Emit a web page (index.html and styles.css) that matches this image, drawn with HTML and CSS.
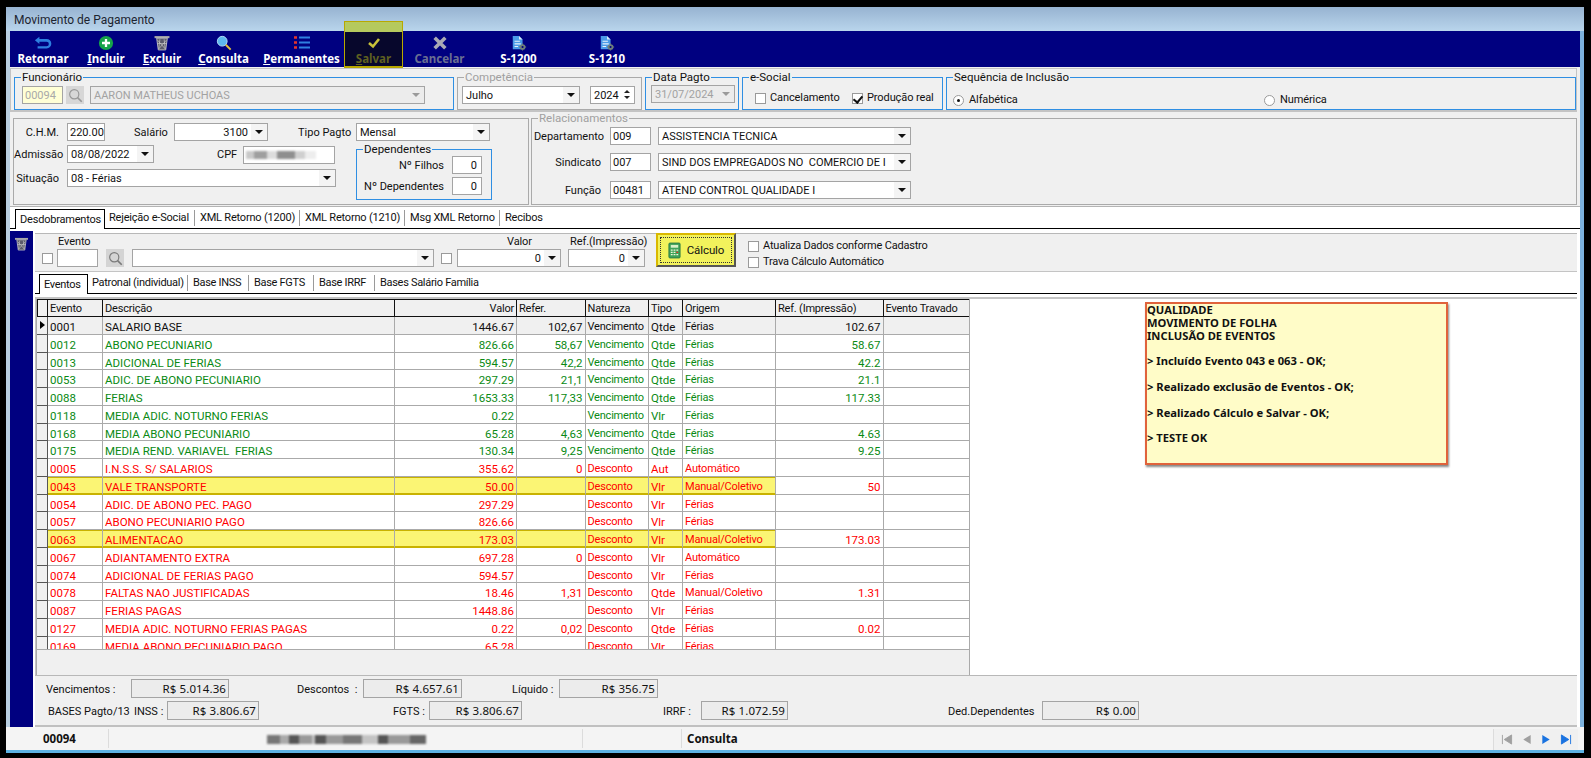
FILE: index.html
```html
<!DOCTYPE html>
<html lang="pt-BR">
<head>
<meta charset="utf-8">
<title>Movimento de Pagamento</title>
<link rel="stylesheet" href="styles.css">
</head>
<body>
<svg class="defs" width="0" height="0" aria-hidden="true">
  <defs>
    <symbol id="i-trash" viewBox="0 0 16 15">
      <path d="M1 1h14v2H1z" fill="#a8a8a8"/>
      <path d="M3 3l1.5 11h7L13 3z" fill="#5a5a6a" stroke="#c8c8c8" stroke-width=".8"/>
      <path d="M4 5l7 8M12 5l-7 8M6 4l-1 9M10 4l1 9M3.5 8h9" stroke="#d0d0d0" stroke-width=".6" fill="none"/>
    </symbol>
    <symbol id="i-doc" viewBox="0 0 18 18">
      <path d="M2 1h7l4 4v11H2z" fill="#4a9be8"/>
      <path d="M9 1l4 4H9z" fill="#d5e9fa"/>
      <path d="M4 7h6M4 10h7M4 13h4" stroke="#e8f3fc" stroke-width="1.2"/>
      <circle cx="13" cy="13.5" r="3.2" fill="#6f7f7a"/>
      <circle cx="13" cy="13.5" r="1.2" fill="#000080"/>
      <path d="M13 9.5v1.5M13 16v1.500M9 13.500h1.500M15.500 13.500H17" stroke="#6f7f7a" stroke-width="1.200"/>
    </symbol>
    <symbol id="i-lens" viewBox="0 0 18 18">
      <circle cx="7.500" cy="7.500" r="5.500" fill="none" stroke="#7a7a7a" stroke-width="1.400"/>
      <path d="M11.500 11.500l5 5" stroke="#7a7a7a" stroke-width="2"/>
    </symbol>
  </defs>
</svg>

<div class="window">
  <header class="titlebar">Movimento de Pagamento</header>

  <nav class="toolbar">
    <div class="tool tool-ret">
      <svg class="tool-icon" viewBox="0 0 20 16"><path d="M6 1L1 5l5 4V6.500h8a2.500 2.500 0 0 1 0 5H4V14h10a5 5 0 0 0 0-10.500H6z" fill="#2d7fe0"/></svg>
      <span><b>Retornar</b></span>
    </div>
    <div class="tool tool-inc">
      <svg class="tool-icon" viewBox="0 0 18 18"><circle cx="9" cy="9" r="8" fill="#16a34a"/><path d="M9 4.500v9M4.500 9h9" stroke="#fff" stroke-width="2.600"/></svg>
      <span><b><u>I</u>ncluir</b></span>
    </div>
    <div class="tool tool-exc">
      <svg class="tool-icon"><use href="#i-trash"/></svg>
      <span><b><u>E</u>xcluir</b></span>
    </div>
    <div class="tool tool-con">
      <svg class="tool-icon" viewBox="0 0 18 18"><circle cx="7" cy="7" r="5.500" fill="#5db7ee" stroke="#b9e2fa"/><path d="M11 11l5.500 5.500" stroke="#e3c13a" stroke-width="2.200"/></svg>
      <span><b><u>C</u>onsulta</b></span>
    </div>
    <div class="tool tool-per">
      <svg class="tool-icon" viewBox="0 0 18 16"><path d="M1 2.500h3M1 7.500h3M1 12.500h3" stroke="#e5352b" stroke-width="2.400"/><path d="M6 2.500h11M6 7.500h11M6 12.500h11" stroke="#2f80e0" stroke-width="2"/></svg>
      <span><b><u>P</u>ermanentes</b></span>
    </div>
    <div class="tool tool-sal">
      <svg class="tool-icon" viewBox="0 0 18 16"><path d="M4 8l4 3.500L14 4" fill="none" stroke="#c9c23a" stroke-width="2.600"/></svg>
      <span><b><u>S</u>alvar</b></span>
    </div>
    <div class="tool tool-can">
      <svg class="tool-icon" viewBox="0 0 18 18"><path d="M3 3l12 12M15 3L3 15" stroke="#a9a9b4" stroke-width="4"/></svg>
      <span><b>Cancelar</b></span>
    </div>
    <div class="tool tool-s0">
      <svg class="tool-icon"><use href="#i-doc"/></svg>
      <span><b>S-1200</b></span>
    </div>
    <div class="tool tool-s1">
      <svg class="tool-icon"><use href="#i-doc"/></svg>
      <span><b>S-1210</b></span>
    </div>
  </nav>

  <section class="top-row">
    <div class="group blue g-func">
      <span class="legend">Funcionário</span>
      <div class="ctl code dis-code">00094</div>
      <div class="lens-btn dis-lens"><svg class="lens"><use href="#i-lens"/></svg></div>
      <div class="ctl sel w-func disabled"><span class="sel-text">AARON MATHEUS UCHOAS</span><span class="sel-arrow light"></span></div>
    </div>
    <div class="group grey g-comp">
      <span class="legend muted">Competência</span>
      <div class="ctl sel w-mes"><span class="sel-text">Julho</span><span class="sel-arrow"></span></div>
      <div class="ctl spin"><span class="sel-text">2024</span><span class="spin-btns"><i class="up"></i><i class="down"></i></span></div>
    </div>
    <div class="group blue g-data">
      <span class="legend">Data Pagto</span>
      <div class="ctl sel w-datap disabled"><span class="sel-text">31/07/2024</span><span class="sel-arrow light"></span></div>
    </div>
    <div class="group blue g-soc">
      <span class="legend">e-Social</span>
      <label class="opt opt-canc"><i class="cb"></i>Cancelamento</label>
      <label class="opt"><i class="cb checked"></i>Produção real</label>
    </div>
    <div class="group blue g-seq">
      <span class="legend">Sequência de Inclusão</span>
      <label class="opt opt-alf"><i class="rd on"></i>Alfabética</label>
      <label class="opt"><i class="rd"></i>Numérica</label>
    </div>
  </section>

  <section class="form-area">
    <div class="panel-left">
      <div class="frow">
        <span class="lbl l-a">C.H.M.</span>
        <div class="ctl w-chm num-left">220.00</div>
        <span class="lbl l-sal">Salário</span>
        <div class="ctl sel w-sal"><span class="sel-text right">3100</span><span class="sel-arrow"></span></div>
        <span class="lbl l-tipo">Tipo Pagto</span>
        <div class="ctl sel w-tipo"><span class="sel-text">Mensal</span><span class="sel-arrow"></span></div>
      </div>
      <div class="fsplit">
        <div class="fcol">
          <div class="frow">
            <span class="lbl l-a">Admissão</span>
            <div class="ctl sel w-adm"><span class="sel-text">08/08/2022</span><span class="sel-arrow"></span></div>
            <span class="lbl l-cpf">CPF</span>
            <div class="ctl w-cpf"><span class="mosaic cpf-mosaic"></span></div>
          </div>
          <div class="frow frow-sit">
            <span class="lbl l-a">Situação</span>
            <div class="ctl sel w-sit"><span class="sel-text">08 - Férias</span><span class="sel-arrow"></span></div>
          </div>
        </div>
        <div class="group blue g-dep">
          <span class="legend">Dependentes</span>
          <div class="dep-row"><span class="lbl">Nº Filhos</span><div class="ctl w-dep num">0</div></div>
          <div class="dep-row"><span class="lbl">Nº Dependentes</span><div class="ctl w-dep num">0</div></div>
        </div>
      </div>
    </div>
    <div class="panel-rel">
      <span class="legend muted">Relacionamentos</span>
      <div class="rel-row rel-1"><span class="lbl l-rel l-rel-d">Departamento</span><div class="ctl w-code">009</div><div class="ctl sel w-name"><span class="sel-text">ASSISTENCIA TECNICA</span><span class="sel-arrow"></span></div></div>
      <div class="rel-row rel-2"><span class="lbl l-rel">Sindicato</span><div class="ctl w-code">007</div><div class="ctl sel w-name"><span class="sel-text">SIND DOS EMPREGADOS NO  COMERCIO DE I</span><span class="sel-arrow"></span></div></div>
      <div class="rel-row rel-3"><span class="lbl l-rel">Função</span><div class="ctl w-code">00481</div><div class="ctl sel w-name"><span class="sel-text">ATEND CONTROL QUALIDADE I</span><span class="sel-arrow"></span></div></div>
    </div>
  </section>

  <div class="tabs main-tabs">
    <span class="tab active mt-1">Desdobramentos</span>
    <span class="tab mt-2">Rejeição e-Social</span>
    <span class="tab mt-3">XML Retorno (1200)</span>
    <span class="tab mt-3">XML Retorno (1210)</span>
    <span class="tab mt-4">Msg XML Retorno</span>
    <span class="tab last">Recibos</span>
  </div>

  <div class="lower">
    <aside class="side-strip"><svg class="side-trash"><use href="#i-trash"/></svg></aside>
    <div class="lower-main">
      <div class="filter">
        <div class="ff ff-evento">
          <span class="ff-label ff-label-ev">Evento</span>
          <div class="ff-ctl"><i class="cb cb-ff"></i><div class="ctl w-ev"></div></div>
        </div>
        <div class="ff ff-busca">
          <span class="ff-label"></span>
          <div class="ff-ctl"><div class="lens-btn lens-big"><svg class="lens"><use href="#i-lens"/></svg></div><div class="ctl sel w-evsel"><span class="sel-text"></span><span class="sel-arrow"></span></div><i class="cb cb-ff cb-val"></i></div>
        </div>
        <div class="ff ff-valor">
          <span class="ff-label ff-label-val">Valor</span>
          <div class="ff-ctl"><div class="ctl sel w-val"><span class="sel-text right">0</span><span class="sel-arrow"></span></div></div>
        </div>
        <div class="ff ff-ref">
          <span class="ff-label ff-label-ref">Ref.(Impressão)</span>
          <div class="ff-ctl"><div class="ctl sel w-ref"><span class="sel-text right">0</span><span class="sel-arrow"></span></div></div>
        </div>
        <div class="calc">
          <div class="calc-inner">
            <svg class="calc-icon" viewBox="0 0 14 18"><rect x="1" y="1" width="12" height="16" rx="1" fill="#3fa35a" stroke="#2c7a42"/><rect x="3" y="3" width="8" height="3" fill="#d9f0c8"/><path d="M3 8.500h2M6 8.500h2M9 8.500h2M3 11h2M6 11h2M3 13.500h2M6 13.500h2M9 13.500h2" stroke="#eef8d8" stroke-width="1.400"/><path d="M9 11h2" stroke="#e5352b" stroke-width="1.400"/></svg>
            <span>Cálculo</span>
          </div>
        </div>
        <div class="calc-opts">
          <label class="opt"><i class="cb"></i>Atualiza Dados conforme Cadastro</label>
          <label class="opt"><i class="cb"></i>Trava Cálculo Automático</label>
        </div>
      </div>

      <div class="tabs sub-tabs">
        <span class="tab active st-1">Eventos</span>
        <span class="tab st-2">Patronal (individual)</span>
        <span class="tab st-3">Base INSS</span>
        <span class="tab st-4">Base FGTS</span>
        <span class="tab st-3">Base IRRF</span>
        <span class="tab last">Bases Salário Família</span>
      </div>

      <div class="page">
        <div class="page-inner">
          <div class="grid-wrap">
            <div class="grid">
              <div class="g-row g-head"><span></span><span>Evento</span><span>Descrição</span><span class="r">Valor</span><span>Refer.</span><span>Natureza</span><span>Tipo</span><span>Origem</span><span>Ref. (Impressão)</span><span>Evento Travado</span></div>
              <div class="g-row black selected"><span class="ind"><i class="ptr"></i></span><span>0001</span><span>SALARIO BASE</span><span class="r">1446.67</span><span class="r">102,67</span><span>Vencimento</span><span>Qtde</span><span>Férias</span><span class="r">102.67</span><span></span></div>
              <div class="g-row green"><span class="ind"></span><span>0012</span><span>ABONO PECUNIARIO</span><span class="r">826.66</span><span class="r">58,67</span><span>Vencimento</span><span>Qtde</span><span>Férias</span><span class="r">58.67</span><span></span></div>
              <div class="g-row green"><span class="ind"></span><span>0013</span><span>ADICIONAL DE FERIAS</span><span class="r">594.57</span><span class="r">42,2</span><span>Vencimento</span><span>Qtde</span><span>Férias</span><span class="r">42.2</span><span></span></div>
              <div class="g-row green"><span class="ind"></span><span>0053</span><span>ADIC. DE ABONO PECUNIARIO</span><span class="r">297.29</span><span class="r">21,1</span><span>Vencimento</span><span>Qtde</span><span>Férias</span><span class="r">21.1</span><span></span></div>
              <div class="g-row green"><span class="ind"></span><span>0088</span><span>FERIAS</span><span class="r">1653.33</span><span class="r">117,33</span><span>Vencimento</span><span>Qtde</span><span>Férias</span><span class="r">117.33</span><span></span></div>
              <div class="g-row green"><span class="ind"></span><span>0118</span><span>MEDIA ADIC. NOTURNO FERIAS</span><span class="r">0.22</span><span class="r"></span><span>Vencimento</span><span>Vlr</span><span>Férias</span><span class="r"></span><span></span></div>
              <div class="g-row green"><span class="ind"></span><span>0168</span><span>MEDIA ABONO PECUNIARIO</span><span class="r">65.28</span><span class="r">4,63</span><span>Vencimento</span><span>Qtde</span><span>Férias</span><span class="r">4.63</span><span></span></div>
              <div class="g-row green"><span class="ind"></span><span>0175</span><span>MEDIA REND. VARIAVEL  FERIAS</span><span class="r">130.34</span><span class="r">9,25</span><span>Vencimento</span><span>Qtde</span><span>Férias</span><span class="r">9.25</span><span></span></div>
              <div class="g-row red"><span class="ind"></span><span>0005</span><span>I.N.S.S. S/ SALARIOS</span><span class="r">355.62</span><span class="r">0</span><span>Desconto</span><span>Aut</span><span>Automático</span><span class="r"></span><span></span></div>
              <div class="g-row red mark"><span class="ind"></span><span>0043</span><span>VALE TRANSPORTE</span><span class="r">50.00</span><span class="r"></span><span>Desconto</span><span>Vlr</span><span>Manual/Coletivo</span><span class="r">50</span><span></span></div>
              <div class="g-row red"><span class="ind"></span><span>0054</span><span>ADIC. DE ABONO PEC. PAGO</span><span class="r">297.29</span><span class="r"></span><span>Desconto</span><span>Vlr</span><span>Férias</span><span class="r"></span><span></span></div>
              <div class="g-row red"><span class="ind"></span><span>0057</span><span>ABONO PECUNIARIO PAGO</span><span class="r">826.66</span><span class="r"></span><span>Desconto</span><span>Vlr</span><span>Férias</span><span class="r"></span><span></span></div>
              <div class="g-row red mark"><span class="ind"></span><span>0063</span><span>ALIMENTACAO</span><span class="r">173.03</span><span class="r"></span><span>Desconto</span><span>Vlr</span><span>Manual/Coletivo</span><span class="r">173.03</span><span></span></div>
              <div class="g-row red"><span class="ind"></span><span>0067</span><span>ADIANTAMENTO EXTRA</span><span class="r">697.28</span><span class="r">0</span><span>Desconto</span><span>Vlr</span><span>Automático</span><span class="r"></span><span></span></div>
              <div class="g-row red"><span class="ind"></span><span>0074</span><span>ADICIONAL DE FERIAS PAGO</span><span class="r">594.57</span><span class="r"></span><span>Desconto</span><span>Vlr</span><span>Férias</span><span class="r"></span><span></span></div>
              <div class="g-row red"><span class="ind"></span><span>0078</span><span>FALTAS NAO JUSTIFICADAS</span><span class="r">18.46</span><span class="r">1,31</span><span>Desconto</span><span>Qtde</span><span>Manual/Coletivo</span><span class="r">1.31</span><span></span></div>
              <div class="g-row red"><span class="ind"></span><span>0087</span><span>FERIAS PAGAS</span><span class="r">1448.86</span><span class="r"></span><span>Desconto</span><span>Vlr</span><span>Férias</span><span class="r"></span><span></span></div>
              <div class="g-row red"><span class="ind"></span><span>0127</span><span>MEDIA ADIC. NOTURNO FERIAS PAGAS</span><span class="r">0.22</span><span class="r">0,02</span><span>Desconto</span><span>Qtde</span><span>Férias</span><span class="r">0.02</span><span></span></div>
              <div class="g-row red"><span class="ind"></span><span>0169</span><span>MEDIA ABONO PECUNIARIO PAGO</span><span class="r">65.28</span><span class="r"></span><span>Desconto</span><span>Vlr</span><span>Férias</span><span class="r"></span><span></span></div>
            </div>
          </div>
          <div class="note">
            <p>QUALIDADE<br>MOVIMENTO DE FOLHA<br>INCLUSÃO DE EVENTOS</p>
            <p>&gt; Incluído Evento 043 e 063 - OK;</p>
            <p>&gt; Realizado exclusão de Eventos - OK;</p>
            <p>&gt; Realizado Cálculo e Salvar - OK;</p>
            <p>&gt; TESTE OK</p>
          </div>
        </div>
      </div>

      <div class="summary">
        <div class="s-row">
          <span class="s-lbl s-venc">Vencimentos :</span><span class="s-box b-venc">R$ 5.014.36</span>
          <span class="s-lbl s-desc">Descontos&nbsp; :</span><span class="s-box b-desc">R$ 4.657.61</span>
          <span class="s-lbl s-liq">Líquido :</span><span class="s-box b-liq">R$ 356.75</span>
        </div>
        <div class="s-row s-row2">
          <span class="s-lbl s-bases">BASES Pagto/13</span><span class="s-lbl s-inss">INSS :</span><span class="s-box b-inss">R$ 3.806.67</span>
          <span class="s-lbl s-fgts">FGTS :</span><span class="s-box b-fgts">R$ 3.806.67</span>
          <span class="s-lbl s-irrf">IRRF :</span><span class="s-box b-irrf">R$ 1.072.59</span>
          <span class="s-lbl s-ded">Ded.Dependentes</span><span class="s-box b-ded">R$ 0.00</span>
        </div>
      </div>
    </div>
  </div>

  <footer class="status">
    <div class="st-cell st-code">00094</div>
    <div class="st-cell st-name"><span class="mosaic name-mosaic"></span></div>
    <div class="st-cell st-empty"></div>
    <div class="st-cell st-mode">Consulta</div>
    <div class="st-nav">
      <svg viewBox="0 0 12 12" class="nav-i"><path d="M1 1v10M11 1v10L3 6z" fill="#a0a0a0" stroke="#a0a0a0"/></svg>
      <svg viewBox="0 0 10 12" class="nav-i nav-sm"><path d="M9 1v10L1 6z" fill="#a0a0a0"/></svg>
      <svg viewBox="0 0 10 12" class="nav-i nav-sm"><path d="M1 1v10l8-5z" fill="#1a73e0"/></svg>
      <svg viewBox="0 0 12 12" class="nav-i"><path d="M1 1v10l8-5zM11 1v10" fill="#1a73e0" stroke="#1a73e0"/></svg>
    </div>
  </footer>
</div>
</body>
</html>
```

FILE: styles.css
```css
* { box-sizing: border-box; }
html, body { margin: 0; padding: 0; height: 758px; overflow: hidden; }
body { background: #000; font: 11px/14px Roboto, "Liberation Sans", sans-serif; color: #111; }
.defs { position: absolute; }
p { margin: 0; }
i { display: block; font-style: normal; }

.window { margin: 7px 0 0 6px; width: 1578px; height: 746px; display: flex; flex-direction: column;
  background: #f0f0f0; border-left: 4px solid #b9cfe2; border-right: 4px solid #7db2de; }

.titlebar { height: 24px; margin: 0 -4px; padding: 1px 0 0 8px; line-height: 24px; font-size: 12px; color: #1c2430;
  background: linear-gradient(#97b3d1, #b9d5ec); }

.toolbar { height: 36px; flex: none; display: flex; background: #000080; margin-bottom: 1px; }
.tool { flex: none; display: flex; flex-direction: column; align-items: center; padding-top: 4px; color: #fff;
  font: 700 11.5px/14px "Noto Sans", sans-serif; position: relative; }
.tool b { font-weight: 700; white-space: nowrap; }
.tool-icon { width: 18px; height: 16px; margin-bottom: 1px; }
.tool-ret { width: 66px; } .tool-inc { width: 60px; } .tool-exc { width: 52px; } .tool-con { width: 71px; }
.tool-per { width: 85px; } .tool-can { width: 73px; color: #6a6f92; } .tool-s0 { width: 85px; } .tool-s1 { width: 92px; }
.tool-sal { width: 59px; color: #5f6020; background: #07072c; border: solid #b8a800; border-width: 0 1px 2px; height: 37px; z-index: 1; }
.tool-sal::before { content: ""; position: absolute; left: -1px; right: -1px; top: -10px; height: 10px; background: #b5c95e;
  border: solid #b8a800; border-width: 1px 1px 0; }

.top-row { height: 44px; flex: none; display: flex; gap: 3px; padding: 9px 4px 0; border: 1px solid #c4c4c4; border-bottom: 2px solid #c4c4c4; margin: 0 3px 0 0; }
.group { position: relative; border: 1px solid; display: flex; align-items: flex-start; height: 33px; padding-top: 8px; flex: none; margin-top: -1px; }
.group.blue { border-color: #2f8fe3; }
.group.grey { border-color: #aaa; }
.legend { position: absolute; left: 6px; top: -7px; line-height: 13px; background: #f0f0f0; padding: 0 1px; font-size: 11.5px; white-space: nowrap; }
.legend.muted { color: #a0a0a0; }
.g-func { width: 440px; padding-left: 7px; margin-left: -1px; }
.g-comp { width: 185px; padding-left: 4px; }
.g-data { width: 94px; padding-left: 5px; }
.g-soc { width: 201px; padding-left: 12px; }
.g-seq { width: 630px; padding-left: 6px; }

.ctl { height: 18px; flex: none; border: 1px solid #a4a4a4; background: #fff; line-height: 17px; padding: 0 2px; white-space: pre; overflow: hidden; }
.sel { display: flex; padding-right: 0; }
.sel-text { flex: 1; min-width: 0; overflow: hidden; padding-left: 1px; }
.sel-text.right { text-align: right; padding-right: 3px; }
.sel-arrow { width: 16px; flex: none; position: relative; background: #f4f4f4; }
.sel-arrow::after { content: ""; position: absolute; left: 4px; top: 6px; border: 4px solid transparent; border-top: 4px solid #111; border-bottom: 0; }
.sel-arrow.light::after { border-top-color: #9a9a9a; }
.disabled { background: #ececec; color: #a2a2a2; }
.disabled .sel-arrow { background: #ececec; }
.code { width: 41px; }
.dis-code { background: #ffffd6; color: #a9a9a9; }
.lens-btn { width: 18px; height: 18px; flex: none; background: #d4d4d4; margin-left: 3px; display: flex; align-items: center; justify-content: center; }
.dis-lens { background: #cfcfcf; margin-right: 6px; opacity: .75; }
.lens { width: 15px; height: 15px; }
.w-func { width: 335px; }
.w-mes { width: 118px; margin-right: 10px; }
.spin { width: 45px; display: flex; padding-right: 0; }
.spin-btns { width: 15px; display: flex; flex-direction: column; gap: 2px; align-items: center; padding-top: 3px; }
.spin-btns .up { border: 3px solid transparent; border-bottom: 3px solid #222; border-top: 0; }
.spin-btns .down { border: 3px solid transparent; border-top: 3px solid #222; border-bottom: 0; margin-top: 1px; }
.w-datap { width: 84px; margin-top: -1px; }

.opt { display: flex; align-items: center; white-space: nowrap; line-height: 14px; letter-spacing: -.1px; }
.g-soc .opt { margin-top: 5px; }
.g-seq .opt { margin-top: 7px; }
.cb { width: 11px; height: 11px; flex: none; border: 1px solid #9a9a9a; background: #fff; margin-right: 4px; position: relative; }
.cb.checked::after { content: ""; position: absolute; left: 2px; top: 0; width: 4px; height: 7px; border: solid #111; border-width: 0 2px 2px 0; transform: rotate(40deg); }
.rd { width: 11px; height: 11px; flex: none; border: 1px solid #9a9a9a; border-radius: 50%; background: #fff; margin-right: 5px; position: relative; }
.rd.on::after { content: ""; position: absolute; left: 3px; top: 3px; width: 3px; height: 3px; border-radius: 50%; background: #111; }
.opt-canc { width: 97px; }
.opt-alf { width: 311px; }

.form-area { height: 95px; flex: none; display: flex; gap: 2px; padding: 6px 3px 0 3px; border-bottom: 1px solid #b4b4b4; }
.panel-left { width: 516px; height: 87px; flex: none; border: 1px solid #aaa; padding-top: 4px; }
.panel-rel { width: 1046px; height: 87px; flex: none; border: 1px solid #aaa; position: relative; padding-top: 8px; }
.frow { display: flex; align-items: flex-start; height: 18px; }
.lbl { flex: none; line-height: 19px; text-align: right; white-space: nowrap; font-size: 11px; }
.l-a { width: 45px; margin-right: 8px; }
.w-chm { width: 38px; }
.l-sal { width: 32px; margin-left: 29px; margin-right: 8px; }
.w-sal { width: 94px; }
.l-tipo { width: 51px; margin-left: 30px; margin-right: 7px; }
.w-tipo { width: 134px; }
.fsplit { display: flex; margin-top: 4px; }
.fcol { width: 322px; flex: none; }
.w-adm { width: 87px; }
.l-cpf { width: 18px; margin-left: 63px; margin-right: 8px; }
.w-cpf { width: 92px; margin-top: 1px; padding-top: 3px; }
.frow-sit { margin-top: 6px; }
.w-sit { width: 269px; }
.g-dep { width: 136px; height: 51px; margin: 4px 0 0 20px; padding: 6px 9px 0 0; flex-direction: column; align-items: flex-end; gap: 3px; }
.dep-row { display: flex; height: 18px; gap: 8px; }
.w-dep { width: 30px; }
.num { text-align: right; padding-right: 4px; }
.mosaic { display: block; }
.cpf-mosaic { width: 70px; height: 8px; margin-top: 1px; background: linear-gradient(90deg, #c9c9c9 0 12%, #9f9f9f 12% 30%, #dcdcdc 30% 44%, #8f8f8f 44% 70%, #cfcfcf 70% 84%, #ededed 84%); filter: blur(1px); }
.rel-row { display: flex; height: 18px; }
.rel-2 { margin-top: 8px; }
.rel-3 { margin-top: 10px; }
.rel-row .ctl { line-height: 18px; }
.l-rel { width: 69px; margin-right: 9px; }
.l-rel-d { width: 72px; margin-right: 6px; }
.w-code { width: 41px; margin-right: 7px; }
.w-name { width: 253px; }

.tabs { height: 22px; flex: none; display: flex; align-items: flex-end; background: #fff; border-bottom: 1px solid #000; font-size: 11px; letter-spacing: -.2px; }
.tab { height: 16px; line-height: 16px; padding: 0 0 0 5px; margin-bottom: 2px; border-right: 1px solid #9a9a9a; white-space: nowrap; flex: none; }
.tab.last { border-right: 0; }
.tab.active { height: 20px; line-height: 20px; margin-bottom: -1px; background: #fff; border: 1px solid #000; border-bottom: 0; padding: 0 0 0 4px; }
.main-tabs { padding-left: 5px; }
.sub-tabs { padding-left: 4px; letter-spacing: -.3px; }
.tab.mt-1 { width: 90px; }
.tab.mt-2 { width: 90px; padding-left: 4px; }
.tab.mt-3 { width: 105px; }
.tab.mt-4 { width: 95px; }
.tab.st-1 { width: 49px; }
.tab.st-2 { width: 100px; padding-left: 4px; }
.tab.st-3 { width: 61px; }
.tab.st-4 { width: 65px; }

.lower { height: 498px; flex: none; display: flex; background: #fff; padding-top: 2px; }
.side-strip { width: 23px; flex: none; background: #000080; padding: 6px 0 0 4px; }
.side-trash { width: 15px; height: 14px; display: block; }
.lower-main { width: 1542px; margin-left: 2px; flex: none; display: flex; flex-direction: column; padding-top: 2px; margin-top: -2px; }

.filter { height: 39px; flex: none; background: #f0f0f0; border-top: 1px solid #b8b8b8; border-bottom: 1px solid #c4c4c4; display: flex; align-items: flex-start; margin-top: 2px; }
.ff { display: flex; flex-direction: column; flex: none; }
.ff-label { height: 15px; line-height: 16px; white-space: nowrap; font-size: 11px; letter-spacing: -.1px; }
.ff-ctl { display: flex; height: 18px; }
.ff-evento { width: 56px; margin-left: 7px; }
.ff-label-ev { padding-left: 16px; }
.cb-ff { margin: 4px 4px 0 0; }
.w-ev { width: 41px; }
.ff-busca { width: 346px; margin-left: 8px; }
.lens-big { margin: 0 8px 0 0; }
.w-evsel { width: 302px; }
.cb-val { margin: 4px 0 0 7px; }
.ff-valor { width: 104px; margin-left: 5px; }
.ff-label-val { padding-left: 50px; }
.w-val { width: 104px; }
.ff-ref { width: 77px; margin-left: 7px; }
.ff-label-ref { padding-left: 2px; }
.w-ref { width: 77px; }
.calc { width: 80px; height: 34px; flex: none; margin: -1px 0 0 11px; background: #f2f25c; border: 2px solid; border-color: #d9b800 #555 #555 #d9b800; padding: 2px; }
.calc-inner { height: 100%; border: 1px dotted #333; display: flex; align-items: center; justify-content: center; gap: 6px; font-size: 11.5px; letter-spacing: -.1px; }
.calc-icon { width: 13px; height: 17px; }
.calc-opts { margin: 5px 0 0 12px; display: flex; flex-direction: column; gap: 2px; font-size: 11px; }
.calc-opts .opt { letter-spacing: -.2px; }

.page { height: 381px; flex: none; padding-top: 3px; background: #fff; }
.page-inner { height: 378px; border: solid #c4c4c4; border-width: 2px 0 0 1px; display: flex; background: #fff; }
.grid-wrap { width: 934px; height: 376px; flex: none; background: #f0f0f0; border-right: 1px solid #aaa; border-left: 1px solid #aaa; }
.grid { height: 351px; overflow: hidden; border-bottom: 1px solid #aaa; }
.g-row { display: grid; grid-template-columns: 11px 55px 292px 122px 68.500px 63.500px 34px 93px 107.500px 86px; height: 17.780px; background: #fff; line-height: 18px; font-size: 11.500px; }
.g-row > span { border-right: 1px solid #aaa; border-bottom: 1px solid #aaa; padding: 1px 2px 0; white-space: pre; overflow: hidden; }
.g-row > .r { text-align: right; padding: 1px 2px 0 0; }
.g-row > span:nth-child(6), .g-row > span:nth-child(8) { font-size: 11px; letter-spacing: -.2px; }
.g-row > .ind { background: #f0f0f0; border-right-color: #555; border-bottom-color: #555; padding: 0; position: relative; }
.g-head { height: 18px; background: #f0f0f0; color: #111; font-size: 11px; letter-spacing: -.2px; }
.g-head > span { border-right-color: #111; border-bottom-color: #111; border-top: 1px solid #111; padding-top: 0; }
.g-head > .r { padding-top: 0; }
.g-head > span:first-child { border-left: 1px solid #111; padding: 0; }
.black { color: #111; }
.selected > span { background: #f0f0f0; }
.green { color: #0a8a14; }
.red { color: #f00; }
.ptr { position: absolute; left: 3px; top: 4px; border: 4px solid transparent; border-left: 5px solid #000; border-right: 0; }
.mark > span:nth-child(-n+8):not(.ind) { background: #fbf574; box-shadow: inset 0 1px 0 #c9b200, inset 0 -1px 0 #c9b200; }
.mark > span:nth-child(8) { box-shadow: inset 0 1px 0 #c9b200, inset 0 -1px 0 #c9b200, inset -1px 0 0 #c9b200; }
.mark > span:nth-child(n+2):nth-child(-n+8) { border-bottom-color: #c9b200; }

.note { width: 303px; height: 163px; flex: none; margin: 3px 0 0 175px; background: #fffcc8; border: 2px solid #e0633c; box-shadow: 1px 2px 2px #888;
  padding: 0; font: 700 11.200px/12.830px "Noto Sans", sans-serif; color: #111; }
.note p { margin-bottom: 12.830px; }

.summary { flex: none; background: #f0f0f0; border-top: 1px solid #b8b8b8; padding: 3px 0 0 0; border-bottom: 2px solid #c0c0c0; height: 52px; }
.s-row { display: flex; align-items: flex-start; height: 19px; }
.s-row2 { margin-top: 3px; }
.s-lbl { flex: none; white-space: pre; line-height: 22px; font-size: 11px; }
.s-box { flex: none; height: 19px; border: 1px solid #a4a4a4; background: #ececec; text-align: right; padding-right: 2px; font: 11.500px/17px "Noto Sans", sans-serif; letter-spacing: .1px; }
.s-venc { width: 85px; margin-left: 11px; }
.b-venc { width: 98px; }
.s-desc { width: 66px; margin-left: 68px; }
.b-desc { width: 99px; }
.s-liq { width: 47px; margin-left: 50px; }
.b-liq { width: 99px; }
.s-bases { width: 86px; margin-left: 13px; }
.s-inss { width: 33px; }
.b-inss { width: 92px; }
.s-fgts { width: 36px; margin-left: 134px; }
.b-fgts { width: 93px; }
.s-irrf { width: 38px; margin-left: 141px; }
.b-irrf { width: 87px; }
.s-ded { width: 94px; margin-left: 160px; }
.b-ded { width: 97px; }

.status { height: 26px; flex: none; display: flex; padding: 2px 2px 0 4px; background: #f4f4f4; margin: 0 -4px; border-bottom: 3px solid #5fb3e4; }
.st-cell { height: 19px; border-right: 1px solid #dcdcdc; font: 700 11.500px/19px "Noto Sans", sans-serif; flex: none; }
.st-code { width: 99px; padding-left: 33px; }
.st-name { width: 474px; padding: 6px 0 0 158px; }
.name-mosaic { width: 159px; height: 9px; background: linear-gradient(90deg, #777 0 8%, #aaa 8% 14%, #555 14% 20%, #999 20% 28%, #c4c4c4 28% 30%, #555 30% 37%, #999 37% 48%, #777 48% 60%, #c4c4c4 60% 70%, #555 70% 76%, #999 76% 90%, #666 90%); filter: blur(1px); }
.st-empty { width: 99px; }
.st-mode { width: 811px; padding-left: 5px; border-right: 0; }
.st-nav { width: 85px; flex: none; height: 21px; background: #f0f0f0; border-left: 1px solid #dcdcdc; display: flex; align-items: center; padding-left: 7px; gap: 9px; }
.nav-i { width: 12px; height: 11px; flex: none; }
.nav-sm { width: 10px; }
```
